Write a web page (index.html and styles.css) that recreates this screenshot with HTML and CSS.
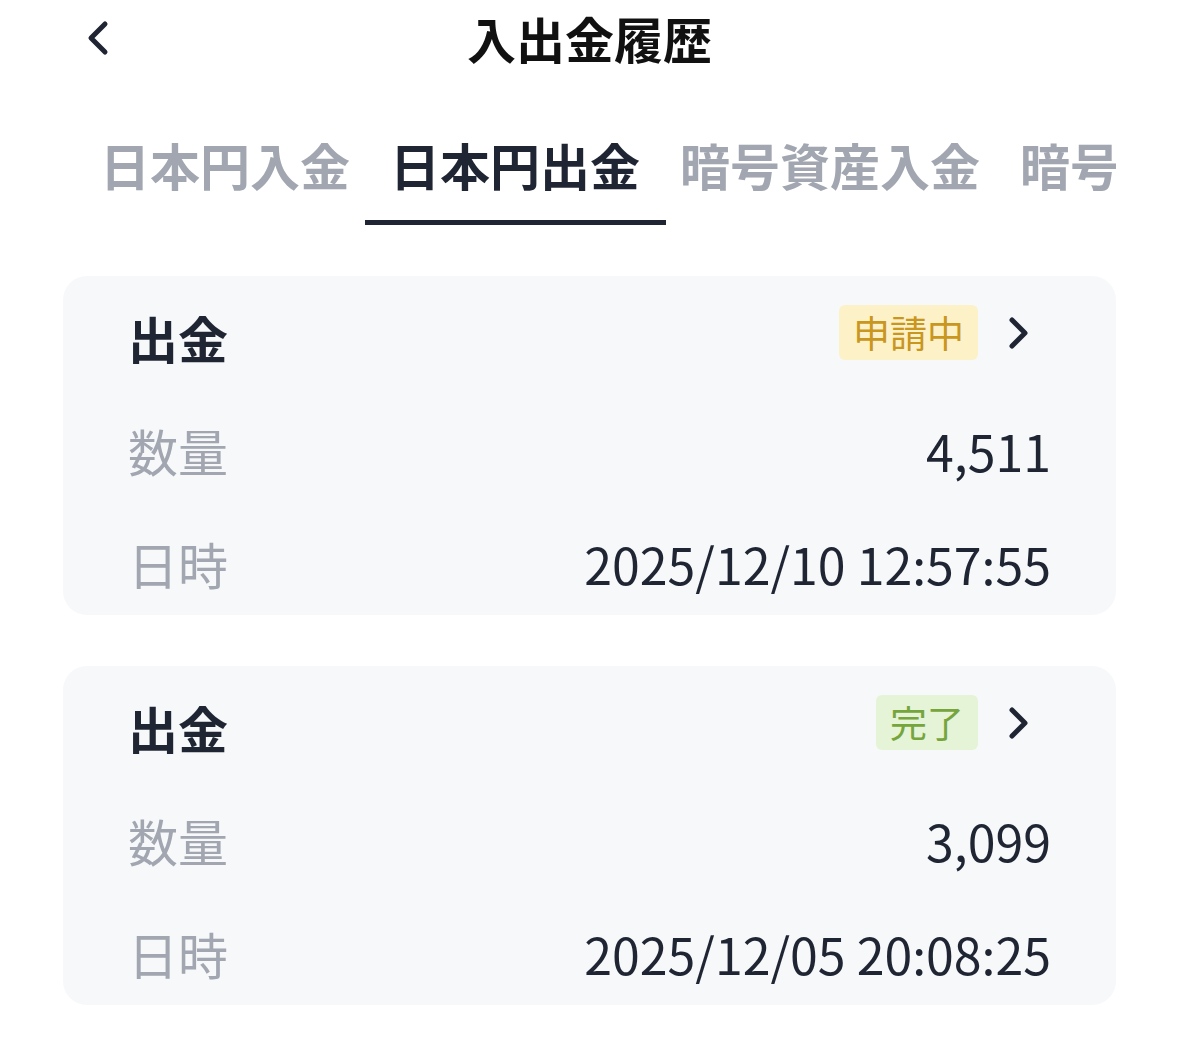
FILE: index.html
```html
<!DOCTYPE html>
<html lang="ja">
<head>
  <meta charset="UTF-8" />
  <title>入出金履歴</title>
  <meta name="viewport" content="width=device-width, initial-scale=1.0" />
  <link rel="stylesheet" href="styles.css">
</head>
<body>
  <!-- ヘッダー -->
  <header class="header">
    <button class="back" aria-label="戻る">
      <svg width="30" height="40" viewBox="0 0 30 40">
        <path d="M22 6 L8 20 L22 34" fill="none" stroke="#1f2533" stroke-width="5" stroke-linecap="round" stroke-linejoin="round"/>
      </svg>
    </button>
    <h1 class="title">入出金履歴</h1>
  </header>

  <!-- タブ -->
  <nav class="tabs">
    <div class="tab">日本円入金</div>
    <div class="tab active">日本円出金</div>
    <div class="tab">暗号資産入金</div>
    <div class="tab">暗号資産出金</div>
  </nav>

  <!-- 履歴リスト -->
  <main class="list">
    <div class="card">
      <div class="row">
        <div class="card-title">出金</div>
        <div class="status">
          <span class="badge pending">申請中</span>
          <svg class="chevron" width="46" height="40" viewBox="0 0 46 40">
            <path d="M7 8 L20 21 L7 34" fill="none" stroke="#1f2533" stroke-width="5" stroke-linecap="round" stroke-linejoin="round"/>
          </svg>
        </div>
      </div>
      <div class="row">
        <div class="label">数量</div>
        <div class="value">4,511</div>
      </div>
      <div class="row">
        <div class="label">日時</div>
        <div class="value">2025/12/10 12:57:55</div>
      </div>
    </div>

    <div class="card">
      <div class="row">
        <div class="card-title">出金</div>
        <div class="status">
          <span class="badge done">完了</span>
          <svg class="chevron" width="46" height="40" viewBox="0 0 46 40">
            <path d="M7 8 L20 21 L7 34" fill="none" stroke="#1f2533" stroke-width="5" stroke-linecap="round" stroke-linejoin="round"/>
          </svg>
        </div>
      </div>
      <div class="row">
        <div class="label">数量</div>
        <div class="value">3,099</div>
      </div>
      <div class="row">
        <div class="label">日時</div>
        <div class="value">2025/12/05 20:08:25</div>
      </div>
    </div>
  </main>
</body>
</html>
```

FILE: styles.css
```css
/* 全体 */
body {
  margin: 0;
  background: #fff;
  font-family: "Noto Sans CJK JP", "Noto Sans", sans-serif;
  color: #1f2533;
}

/* ヘッダー */
.header {
  position: relative;
  height: 76px;
  display: flex;
  align-items: center;
  justify-content: center;
}
.back {
  position: absolute;
  left: 83px;
  top: 18px;
  border: none;
  background: none;
  padding: 0;
}
.title {
  margin: -2px 0 0;
  font-size: 49px;
  font-weight: 700;
  color: #111;
}

/* タブ */
.tabs {
  display: flex;
  gap: 40px;
  margin: 42px 63px 0;
  padding-left: 37px;
  overflow: hidden;
  height: 107px;
}
.tab {
  position: relative;
  flex-shrink: 0;
  font-size: 50px;
  font-weight: 600;
  line-height: 92px;
  color: #a1a6b0;
}
.tab.active {
  color: #1f2533;
}
.tab.active::after {
  content: "";
  position: absolute;
  left: -25px;
  right: -26px;
  bottom: 0;
  height: 5px;
  background: #1f2533;
}

/* 履歴カード */
.list {
  display: flex;
  flex-direction: column;
  gap: 51px;
  margin: 51px 63px 0;
}
.card {
  background: #f7f8fa;
  border-radius: 24px;
  padding: 24px 65px 15px;
  display: flex;
  flex-direction: column;
  gap: 39px;
}
.row {
  height: 74px;
  display: flex;
  align-items: center;
  justify-content: space-between;
}
.card-title {
  font-size: 50px;
  font-weight: 700;
  color: #1f2533;
}
.label {
  font-size: 50px;
  color: #a1a6b0;
}
.value {
  font-size: 50px;
  color: #1f2533;
}
.status {
  display: flex;
  align-items: center;
  gap: 27px;
  margin-top: -10px;
}
.badge {
  font-size: 37px;
  line-height: 55px;
  padding: 0 14px;
  border-radius: 6px;
}
.badge.pending {
  background: #fdf1c8;
  color: #c9961f;
}
.badge.done {
  background: #e5f3d6;
  color: #76a53e;
}
.chevron {
  display: block;
}
```
